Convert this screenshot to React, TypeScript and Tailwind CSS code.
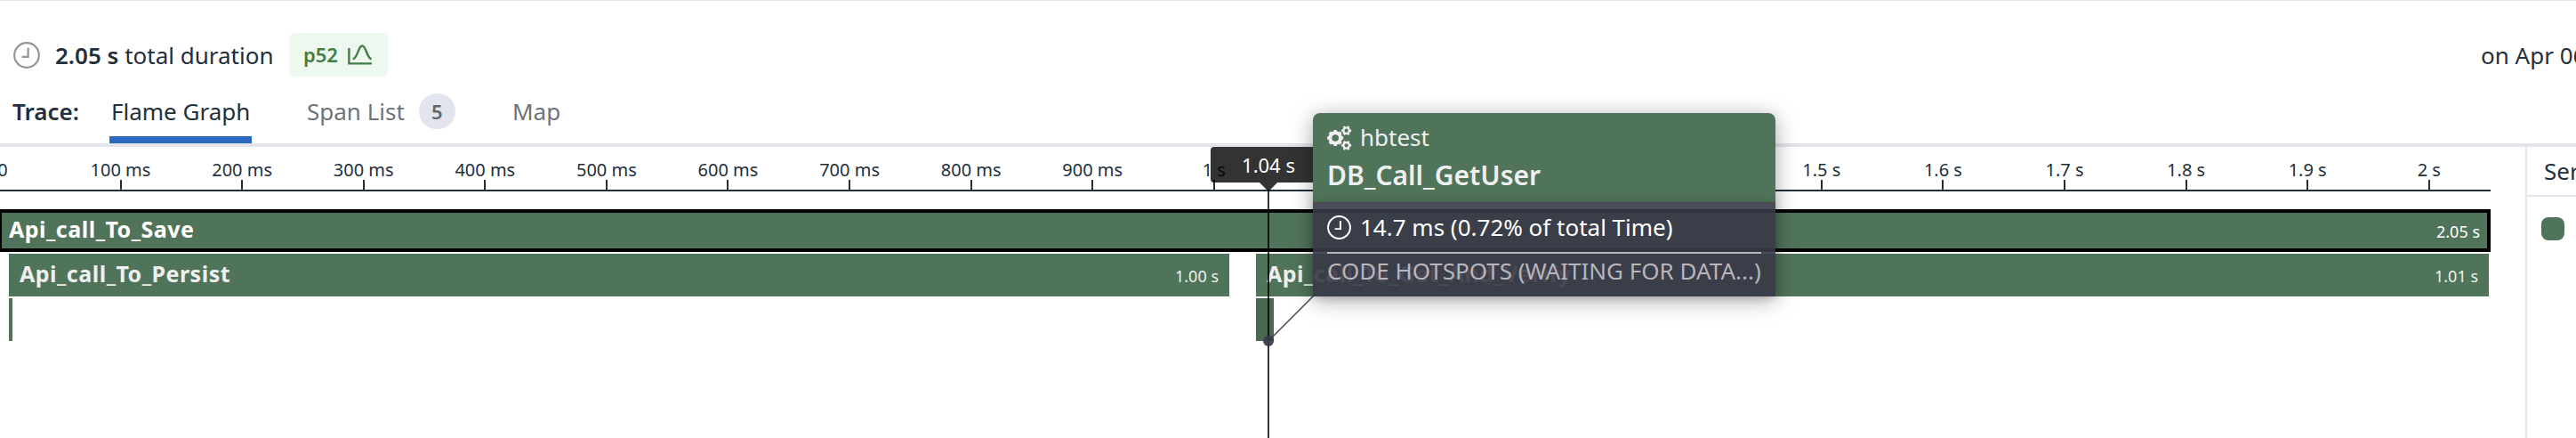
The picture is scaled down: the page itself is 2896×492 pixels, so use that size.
const TICKS = [
  '0', '100 ms', '200 ms', '300 ms', '400 ms', '500 ms', '600 ms', '700 ms', '800 ms', '900 ms',
  '1 s', '1.1 s', '1.2 s', '1.3 s', '1.4 s', '1.5 s', '1.6 s', '1.7 s', '1.8 s', '1.9 s', '2 s',
];
const TICK_STEP = 136.6;

function Clock({ className, stroke }: { className: string; stroke: number }) {
  return (
    <svg viewBox="0 0 30 30" className={className} fill="none" stroke="currentColor" strokeWidth={stroke}>
      <circle cx="15" cy="15" r="13.8" />
      <path d="M16.6 6.8v10h-7" />
    </svg>
  );
}

function gearPath(cx: number, cy: number, outer: number, inner: number, teeth: number, hole: number) {
  const points: string[] = [];
  const step = (Math.PI * 2) / teeth;
  for (let i = 0; i < teeth; i++) {
    const a = i * step;
    for (const [offset, r] of [[-0.32, inner], [-0.22, outer], [0.22, outer], [0.32, inner]]) {
      points.push(`${(cx + r * Math.cos(a + offset * step)).toFixed(2)} ${(cy + r * Math.sin(a + offset * step)).toFixed(2)}`);
    }
  }
  return `M${points.join('L')}ZM${cx - hole} ${cy}a${hole} ${hole} 0 1 0 ${hole * 2} 0a${hole} ${hole} 0 1 0 ${-hole * 2} 0Z`;
}

function Gears() {
  return (
    <svg viewBox="0 0 28 28" className="h-7 w-7 shrink-0" fill="currentColor" fillRule="evenodd">
      <path d={gearPath(9.2, 14, 9.2, 7.8, 8, 3.8)} />
      <path d={gearPath(21.6, 5.7, 5.6, 4.4, 6, 2.1)} />
      <path d={gearPath(21.6, 22.3, 5.6, 4.4, 6, 2.1)} />
    </svg>
  );
}

function Header() {
  return (
    <header className="flex h-[92px] items-center border-t border-[#e2e5ed] pl-[15px] pt-[30px]">
      <Clock className="mt-px h-[30px] w-[30px] shrink-0 text-[#8f959a]" stroke={2.2} />
      <p className="ml-[17px] w-[263px] whitespace-nowrap text-[26px] leading-none">
        <b className="font-semibold">2.05 s</b> total duration
      </p>
      <span className="flex h-[49px] w-[111px] items-center rounded-[6px] bg-[#edf8ef] pl-4 text-[22px] font-semibold text-[#417e45]">
        p52
        <svg viewBox="0 0 27 23" className="ml-[11px] h-[23px] w-[27px]" fill="none" stroke="currentColor" strokeWidth="2.4">
          <path d="M1.4 4v17.4H27" />
          <path d="M5.7 16.4C11.5 15 11.5 1.5 16.2 1.5S21 15 26.6 16.4" />
        </svg>
      </span>
      <span className="ml-auto w-[107px] overflow-hidden whitespace-nowrap text-[26px] leading-[36px]">on Apr 06</span>
    </header>
  );
}

function Tabs() {
  return (
    <nav className="flex h-[73px] items-stretch border-b-4 border-[#e2e5ed] text-[26px] leading-[66px] text-[#6c737a]">
      <b className="w-[123px] pl-[14px] font-semibold text-[#232f3a]">Trace:</b>
      <span className="w-[160px] border-b-8 border-[#2a6ac0] pl-[2px] text-[#232f3a]">Flame Graph</span>
      <span className="ml-[62px] flex h-[66px] w-[231px] items-center">
        Span List
        <span className="ml-4 flex h-10 w-[41px] items-center justify-center rounded-full bg-[#e2e5ed] text-[22px] font-semibold leading-none text-[#5f676f]">5</span>
      </span>
      <span>Map</span>
    </nav>
  );
}

function Ruler() {
  return (
    <div className="flex h-[50px] w-[2800px] shrink-0 overflow-hidden border-b-2 border-[#232f3a] text-[20px] leading-[51px]">
      <div className="-ml-[69.4px] flex">
        {TICKS.map((label) => (
          <div key={label} className="flex shrink-0 flex-col items-center" style={{ width: TICK_STEP }}>
            <span className={`h-[37px] whitespace-nowrap ${label === '0' ? 'pl-2' : ''}`}>{label}</span>
            {label !== '0' && <i className="h-[11px] w-[2px] bg-[#232f3a]" />}
          </div>
        ))}
      </div>
    </div>
  );
}

function Bar({ name, time, className }: { name: string; time: string; className: string }) {
  return (
    <div className={`flex h-12 items-center justify-between bg-[#50745a] ${className}`}>
      <b className="-mt-0.5 whitespace-nowrap text-[25px] font-bold tracking-[0.5px]">{name}</b>
      <span className="mt-0.5 text-[18px]">{time}</span>
    </div>
  );
}

function Tooltip() {
  return (
    <div className="absolute left-[1476px] top-[127px] h-[206px] w-[520px] rounded-t-[8px] shadow-[0_4px_24px_rgba(0,0,0,0.35)]">
      <div className="h-[100px] rounded-t-[8px] bg-[#50745a] px-4 pt-[9px] text-[#efefef]">
        <div className="flex h-[38px] items-center gap-[9px] text-[26px]">
          <Gears />
          <span className="-mt-0.5">hbtest</span>
        </div>
        <b className="block text-[30px] font-semibold leading-[46px]">DB_Call_GetUser</b>
      </div>
      <div className="h-[106px] bg-[#383946]/91 px-4 shadow-[0_0_10px_rgba(0,0,0,0.2)]">
        <div className="flex h-[58px] items-center gap-[10px] border-b-2 border-[#b9b5bc] text-[26px] text-white">
          <Clock className="h-[27px] w-[27px] shrink-0" stroke={2.2} />
          14.7 ms (0.72% of total Time)
        </div>
        <div className="whitespace-nowrap text-[26px] leading-[39px] text-[#b9b5bc]">CODE HOTSPOTS (WAITING FOR DATA...)</div>
      </div>
    </div>
  );
}

export default function App() {
  return (
    <div className="relative h-[492px] w-[2896px] overflow-hidden bg-white font-['Noto_Sans',sans-serif] text-[#232f3a]">
      <Header />
      <Tabs />
      <div className="flex h-[327px]">
        <main className="w-[2839px] shrink-0">
          <Ruler />
          <div className="mt-5 flex w-[2800px] flex-col gap-[2px] text-[#efefef]">
            <Bar name="Api_call_To_Save" time="2.05 s" className="border-4 border-l-2 border-black px-2 text-white" />
            <div className="flex pl-[10px]">
              <Bar name="Api_call_To_Persist" time="1.00 s" className="w-[1372px] px-3" />
              <Bar name="Api_call_To_Get_And_Verify" time="1.01 s" className="ml-[30px] w-[1386px] px-3" />
            </div>
            <div className="flex pl-[10px]">
              <i className="h-12 w-1 bg-[#50745a]" />
              <i className="ml-[1398px] h-12 w-5 bg-[#48694f]" />
            </div>
          </div>
        </main>
        <aside className="w-[57px] overflow-hidden border-l-2 border-[#e2e5ed]">
          <div className="h-[56px] whitespace-nowrap border-b-2 border-[#e2e5ed] pl-[19px] text-[26px] leading-[55px]">Service</div>
          <i className="ml-4 mt-[23px] block h-[26px] w-[26px] rounded-[8px] bg-[#50745a]" />
        </aside>
      </div>
      <div className="absolute left-[1361px] top-[165px] h-10 w-[130px] rounded-[4px] bg-black/80 text-center text-[22px] leading-10 text-white">1.04 s</div>
      <svg className="absolute left-[1400px] top-[205px] h-[287px] w-[90px]" viewBox="0 0 90 287">
        <path d="M16 0h20L27 9v278h-2V9z" fill="#000" fillOpacity=".8" />
        <path d="M26 178L77 127" stroke="#4b4b58" strokeWidth="1.6" />
        <circle cx="26" cy="178" r="6" fill="#363845" fillOpacity=".92" />
      </svg>
      <Tooltip />
    </div>
  );
}
